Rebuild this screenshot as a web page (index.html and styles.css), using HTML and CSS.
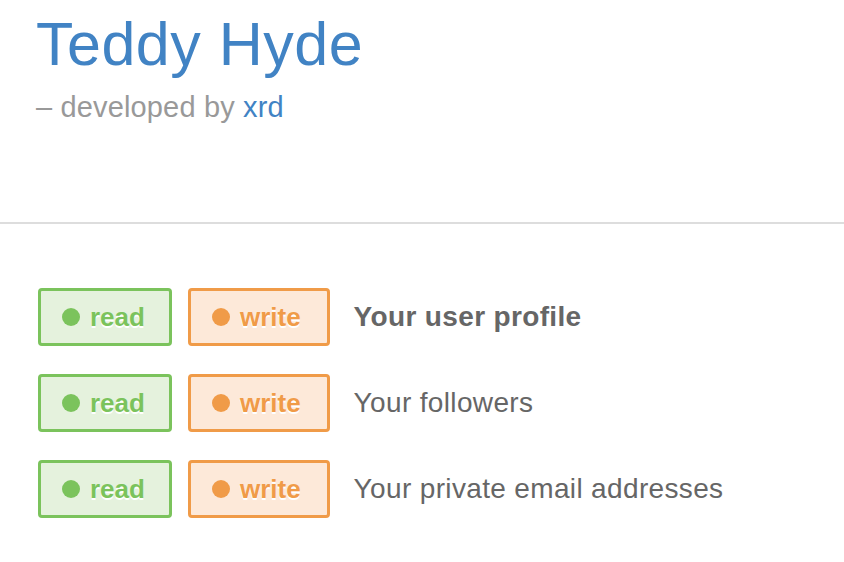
FILE: index.html
```html
<!DOCTYPE html>
<html>
<head>
<meta charset="utf-8">
<link rel="stylesheet" href="styles.css">
</head>
<body>
<header class="header">
  <h1 class="title">Teddy Hyde</h1>
  <p class="byline">– developed by <a class="author" href="#">xrd</a></p>
</header>
<main class="scopes">
  <div class="scope">
    <span class="badge badge-read"><span class="dot"></span>read</span>
    <span class="badge badge-write"><span class="dot"></span>write</span>
    <span class="desc desc-strong">Your user profile</span>
  </div>
  <div class="scope">
    <span class="badge badge-read"><span class="dot"></span>read</span>
    <span class="badge badge-write"><span class="dot"></span>write</span>
    <span class="desc">Your followers</span>
  </div>
  <div class="scope">
    <span class="badge badge-read"><span class="dot"></span>read</span>
    <span class="badge badge-write"><span class="dot"></span>write</span>
    <span class="desc">Your private email addresses</span>
  </div>
</main>
</body>
</html>
```
FILE: styles.css
```css
* { box-sizing: border-box; }
html, body { margin: 0; padding: 0; background: #fff; }
body { font-family: "Liberation Sans", Arial, Helvetica, sans-serif; }

.header {
  padding: 8px 0 97px 36px;
  border-bottom: 2px solid #dddddd;
}
.title {
  margin: 0;
  font-size: 61px;
  line-height: 72px;
  letter-spacing: 0.5px;
  font-weight: normal;
  color: #4183c4;
}
.byline {
  margin: 9px 0 0;
  font-size: 29px;
  line-height: 36px;
  letter-spacing: 0.15px;
  color: #999999;
}
.author { color: #4183c4; text-decoration: none; }

.scopes {
  padding: 64px 0 0 38px;
  display: flex;
  flex-direction: column;
  gap: 28px;
}
.scope {
  display: flex;
  align-items: center;
  gap: 16px;
}
.badge {
  display: flex;
  align-items: center;
  height: 58px;
  padding: 0 24px 0 21px;
  border: 3px solid;
  border-radius: 4px;
  font-size: 26px;
  font-weight: bold;
  text-shadow: 0 1.5px 0 #ffffff;
}
.dot {
  width: 18px;
  height: 18px;
  border-radius: 50%;
  margin-right: 10px;
}
.badge-read { color: #7bc35c; border-color: #7bc35c; background: #e5f2dd; }
.badge-read .dot { background: #7bc35c; }
.badge-write { color: #f09b48; border-color: #f09b48; background: #fde9d9; padding-right: 26px; }
.badge-write .dot { background: #f09b48; }

.desc {
  margin-left: 8px;
  font-size: 28px;
  letter-spacing: 0.35px;
  color: #666666;
}
.desc-strong { font-weight: bold; }
```
